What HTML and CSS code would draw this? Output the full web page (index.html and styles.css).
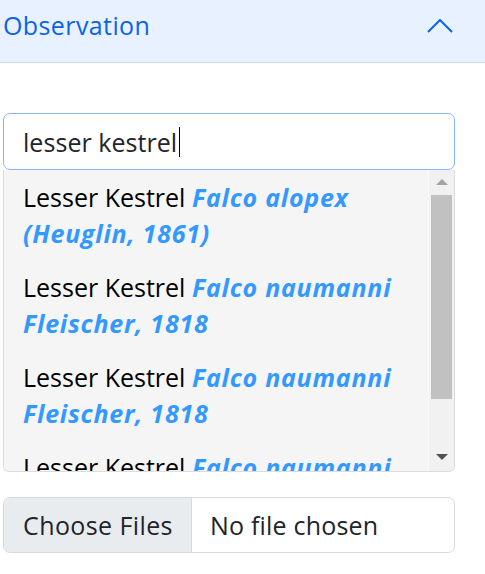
FILE: index.html
```html
<!DOCTYPE html>
<html>
<head>
<meta charset="utf-8">
<link rel="stylesheet" href="styles.css">
</head>
<body>
<div class="acc-header">
  <span class="acc-title">Observation</span>
  <svg class="chev" width="26" height="14" viewBox="0 0 26 14"><path d="M1 13 L13 1 L25 13" fill="none" stroke="#0c63e4" stroke-width="2"/></svg>
</div>
<div class="content">
  <div class="search">
    <span class="typed">lesser kestrel</span><span class="caret"></span>
  </div>
  <div class="dropdown">
    <div class="list">
      <div class="item">Lesser Kestrel <em>Falco alopex (Heuglin, 1861)</em></div>
      <div class="item">Lesser Kestrel <em>Falco naumanni Fleischer, 1818</em></div>
      <div class="item">Lesser Kestrel <em>Falco naumanni Fleischer, 1818</em></div>
      <div class="item">Lesser Kestrel <em>Falco naumanni Fleischer, 1818</em></div>
    </div>
    <div class="sbar">
      <div class="arrow up"></div>
      <div class="track"><div class="thumb"></div></div>
      <div class="arrow down"></div>
    </div>
  </div>
  <div class="file">
    <div class="file-btn">Choose Files</div>
    <div class="file-name">No file chosen</div>
  </div>
</div>
</body>
</html>
```
FILE: styles.css
```css
html, body {
  margin: 0;
  padding: 0;
  background: #fff;
}
body {
  font-family: "Open Sans", "Liberation Sans", sans-serif;
  font-size: 25px;
  line-height: 36px;
  color: #212529;
  width: 485px;
  overflow: hidden;
}
.acc-header {
  background: #e7f1ff;
  border-bottom: 1px solid #d3dbe5;
  display: flex;
  align-items: flex-start;
  padding: 7px 0 0 3px;
  box-sizing: border-box;
  height: 63px;
}
.acc-title {
  color: #0c63e4;
  flex: 1;
  letter-spacing: 0.4px;
}
.chev {
  margin: 12px 32px 0 0;
}
.content {
  margin: 50px 0 0 3px;
  width: 452px;
}
.search {
  height: 57px;
  box-sizing: border-box;
  border: 1px solid #86b7fe;
  border-radius: 7px;
  padding: 9px 19px;
  display: flex;
  align-items: center;
  color: #212529;
  letter-spacing: 0.05px;
}
.caret {
  display: inline-block;
  width: 1px;
  height: 30px;
  background: #000;
  margin-left: 2px;
}
.dropdown {
  height: 302px;
  box-sizing: border-box;
  border: 1px solid #dcdcdc;
  border-top: none;
  border-radius: 0 0 6px 6px;
  display: flex;
  overflow: hidden;
  margin-bottom: 25px;
  background: #f5f5f5;
}
.list {
  flex: 1;
  overflow: hidden;
  background: #f5f5f5;
  border-right: 1px solid #fbfbfb;
}
.item {
  padding: 9px 14px 9px 19px;
  color: #000;
  height: 90px;
  box-sizing: border-box;
}
.item em {
  color: #3399ff;
  font-weight: 700;
  font-style: italic;
  letter-spacing: 0.75px;
}
.sbar {
  width: 25px;
  background: #f1f1f1;
  display: flex;
  flex-direction: column;
  align-items: center;
}
.arrow {
  width: 0;
  height: 0;
  border-left: 6px solid transparent;
  border-right: 6px solid transparent;
}
.arrow.up {
  margin-top: 9px;
  border-bottom: 6px solid #a3a3a3;
}
.arrow.down {
  margin-bottom: 11px;
  border-top: 6px solid #505050;
}
.track {
  flex: 1;
  width: 100%;
  padding: 10px 2px 0;
  box-sizing: border-box;
}
.thumb {
  height: 204px;
  background: #c1c1c1;
}
.file {
  height: 56px;
  box-sizing: border-box;
  border: 1px solid #d6d9dd;
  border-radius: 7px;
  display: flex;
  overflow: hidden;
}
.file-btn {
  background: #e9ecef;
  border-right: 1px solid #d6d9dd;
  padding: 9px 0 9px 19px;
  width: 188px;
  flex-shrink: 0;
  box-sizing: border-box;
  display: flex;
  align-items: center;
  white-space: nowrap;
  letter-spacing: 0.4px;
}
.file-name {
  padding: 9px 18px;
  display: flex;
  align-items: center;
  white-space: nowrap;
  letter-spacing: 0.2px;
}
```
